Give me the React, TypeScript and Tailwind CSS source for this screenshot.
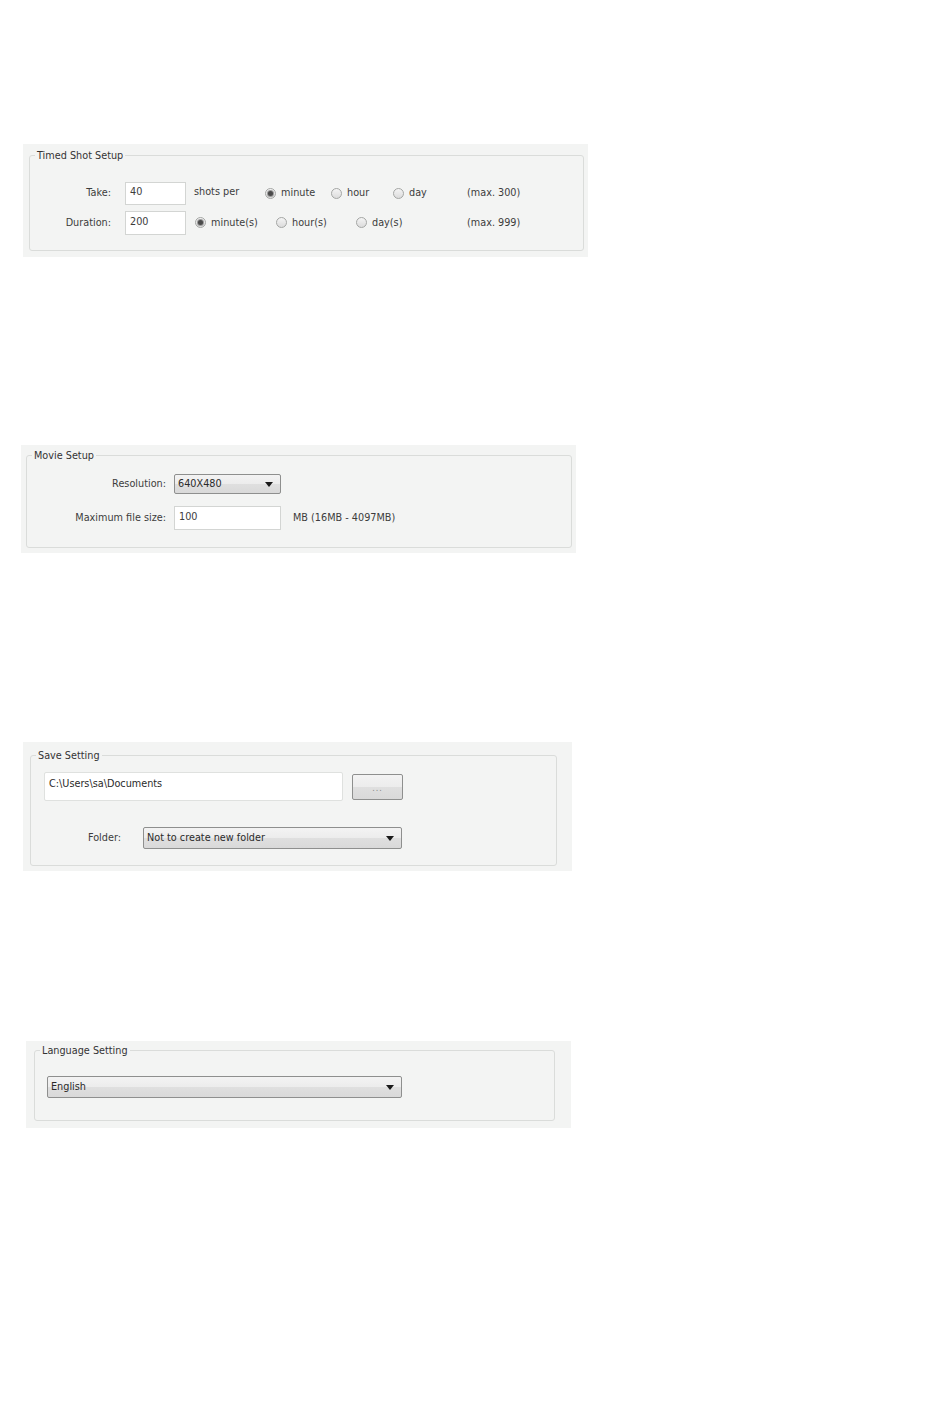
import React from "react";

const font = { fontFamily: '"DejaVu Sans", Verdana, sans-serif' };

function Radio({ checked, label, w }: { checked?: boolean; label: string; w: string }) {
  return (
    <div className={`flex items-center ${w}`}>
      <span className="flex h-[11px] w-[11px] items-center justify-center rounded-full border border-[#a4a6a4] bg-gradient-to-b from-[#f4f4f4] to-[#dcdcdc]">
        {checked && <span className="h-[5px] w-[5px] rounded-full bg-[#4a4a4a] ring-1 ring-[#9a9a9a]" />}
      </span>
      <span className="ml-[5px]">{label}</span>
    </div>
  );
}

function Arrow() {
  return (
    <svg width="8" height="5" viewBox="0 0 8 5" className="shrink-0">
      <polygon points="0,0 8,0 4,5" fill="#1a1a1a" />
    </svg>
  );
}

function Select({ value, w, h }: { value: string; w: string; h: string }) {
  return (
    <div
      className={`flex items-center justify-between rounded-[2px] border border-[#8e8f8e] bg-[linear-gradient(#f3f3f3_0%,#ececec_50%,#dfdfdf_51%,#d9d9d9_100%)] pl-[3px] pr-[7px] ${w} ${h}`}
    >
      <span className="text-[#2a2a2a]">{value}</span>
      <Arrow />
    </div>
  );
}

function Panel({
  outer,
  fs,
  title,
  children,
}: {
  outer: string;
  fs: string;
  title: string;
  children: React.ReactNode;
}) {
  return (
    <div className={`bg-[#f3f4f3] ${outer}`}>
      <fieldset className={`rounded-[3px] border border-[#dadcda] ${fs}`}>
        <legend className="ml-[5px] px-[2px] pt-[1px] leading-[14px] text-[#333]">{title}</legend>
        {children}
      </fieldset>
    </div>
  );
}

export default function App() {
  return (
    <div className="min-h-[1419px] w-[950px] bg-white pt-[144px] text-[9.7px] text-[#3c3c3c]" style={font}>
      {/* Timed Shot Setup */}
      <Panel outer="ml-[23px] w-[565px] h-[113px] pt-[4px] pl-[6px]" fs="w-[555px] h-[103px] pt-[19px]" title="Timed Shot Setup">
        <div className="flex h-[23px] items-center">
          <div className="w-[81px] text-right">Take:</div>
          <div className="ml-[14px] flex h-[23px] w-[61px] items-center border border-[#d3d5d3] bg-white pl-[4px] pb-[2px]">40</div>
          <div className="ml-[8px] w-[71px] pb-[2px]">shots per</div>
          <Radio checked label="minute" w="w-[66px]" />
          <Radio label="hour" w="w-[62px]" />
          <Radio label="day" w="w-[74px]" />
          <div>(max. 300)</div>
        </div>
        <div className="mt-[6px] flex h-[24px] items-center">
          <div className="w-[81px] text-right">Duration:</div>
          <div className="ml-[14px] flex h-[24px] w-[61px] items-center border border-[#d3d5d3] bg-white pl-[4px] pb-[2px]">200</div>
          <div className="ml-[9px] flex">
            <Radio checked label="minute(s)" w="w-[81px]" />
            <Radio label="hour(s)" w="w-[80px]" />
            <Radio label="day(s)" w="w-[111px]" />
          </div>
          <div>(max. 999)</div>
        </div>
      </Panel>

      {/* Movie Setup */}
      <Panel outer="mt-[188px] ml-[21px] w-[555px] h-[108px] pt-[3px] pl-[5px]" fs="w-[546px] h-[100px] pt-[11px]" title="Movie Setup">
        <div className="flex h-[20px] items-center">
          <div className="w-[139px] text-right">Resolution:</div>
          <div className="ml-[8px]">
            <Select value="640X480" w="w-[107px]" h="h-[20px]" />
          </div>
        </div>
        <div className="mt-[12px] flex h-[24px] items-center">
          <div className="w-[139px] text-right">Maximum file size:</div>
          <div className="ml-[8px] flex h-[24px] w-[107px] items-start border border-[#d3d5d3] bg-white pl-[4px] pt-[3px]">100</div>
          <div className="ml-[12px]">MB (16MB - 4097MB)</div>
        </div>
      </Panel>

      {/* Save Setting */}
      <Panel outer="mt-[189px] ml-[23px] w-[549px] h-[129px] pt-[6px] pl-[7px]" fs="w-[527px] h-[118px] pt-[9px]" title="Save Setting">
        <div className="flex items-start">
          <div className="ml-[13px] flex h-[29px] w-[299px] items-start rounded-[2px] border border-[#dfe1df] bg-white pl-[4px] pt-[4px] text-[#2a2a2a]">
            C:\Users\sa\Documents
          </div>
          <div className="ml-[9px] mt-[2px] flex h-[26px] w-[51px] items-center justify-center rounded-[2px] border border-[#8e8f8e] bg-[linear-gradient(#f3f3f3_0%,#ececec_50%,#dfdfdf_51%,#d9d9d9_100%)] pt-[3px] text-[8px] tracking-[1px] text-[#888]">
            ...
          </div>
        </div>
        <div className="mt-[26px] flex h-[22px] items-center">
          <div className="w-[90px] text-right">Folder:</div>
          <div className="ml-[22px]">
            <Select value="Not to create new folder" w="w-[259px]" h="h-[22px]" />
          </div>
        </div>
      </Panel>

      {/* Language Setting */}
      <Panel outer="mt-[170px] ml-[26px] w-[545px] h-[87px] pt-[2px] pl-[8px]" fs="w-[521px] h-[78px] pt-[18px]" title="Language Setting">
        <div className="ml-[12px]">
          <Select value="English" w="w-[355px]" h="h-[22px]" />
        </div>
      </Panel>
    </div>
  );
}
